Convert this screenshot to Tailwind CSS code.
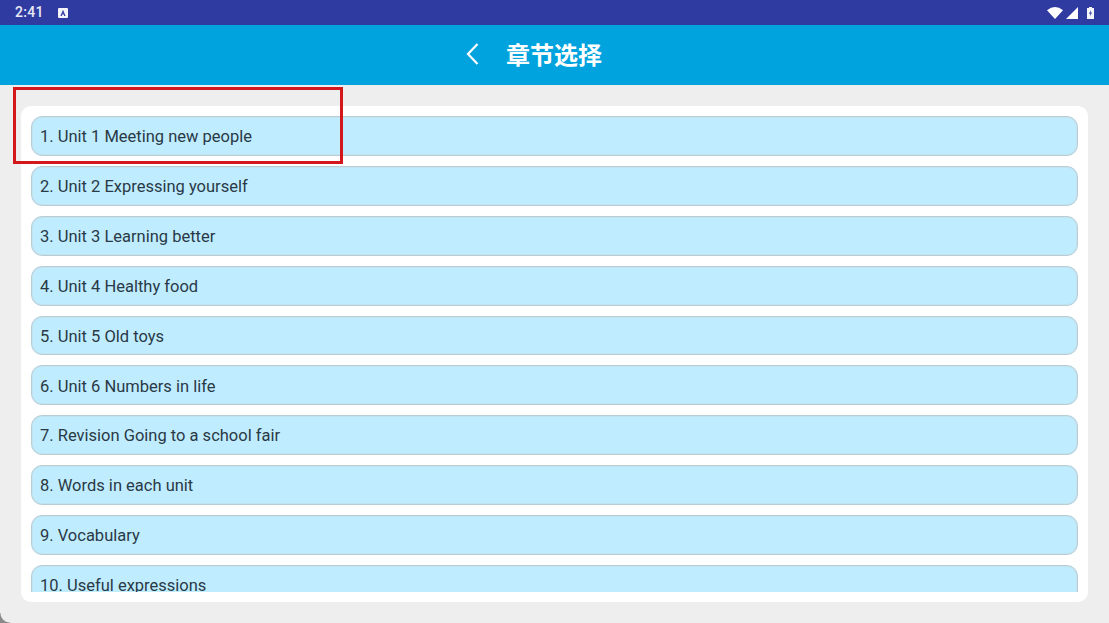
<!DOCTYPE html>
<html lang="zh-CN">
<head>
  <meta charset="UTF-8">
  <meta name="viewport" content="width=device-width, initial-scale=1.0">
  <title>章节选择</title>
  <script src="https://cdn.jsdelivr.net/npm/@tailwindcss/browser@4"></script>
</head>
<body class="bg-[#eeeeee] font-['Roboto','Noto_Sans_CJK_SC',sans-serif]">
  <div class="relative w-[1109px] h-[623px] overflow-hidden bg-[#eeeeee]">
    <!-- Status bar -->
    <div class="h-[25px] bg-[#303ba2] flex items-center justify-between pl-[15px] pr-[15px] text-white">
      <div class="flex items-center">
        <span class="text-[14px] font-medium tracking-[0.3px] text-[#e8eaf6]">2:41</span>
        <svg class="ml-[14px]" width="10" height="10" viewBox="0 0 10 10"><rect width="10" height="10" rx="1" fill="#f4f5fb"/><path d="M5 1.8 L7.6 8 H6.2 L5.7 6.6 H4.3 L3.8 8 H2.4 Z M4.7 5.5 H5.3 L5 4.5 Z" fill="#303ba2" fill-rule="evenodd"/></svg>
      </div>
      <div class="flex items-center">
        <svg width="16" height="12" viewBox="0 0 16 12"><path d="M0 3.2 Q8 -3.2 16 3.2 L8 12 Z" fill="#fff"/></svg>
        <svg class="ml-[3px]" width="12" height="12" viewBox="0 0 12 12"><path d="M12 0 V12 H0 Z" fill="#fff"/></svg>
        <svg class="ml-[9px]" width="7" height="12" viewBox="0 0 7 12"><path d="M2 0 H5 V1 H7 V12 H0 V1 H2 Z" fill="#f4f5fb"/><path d="M4 3 L2 6.8 H3.4 L3 9.5 L5 5.6 H3.6 Z" fill="#303ba2"/></svg>
      </div>
    </div>

    <!-- Header -->
    <div class="h-[60px] bg-[#00a3dd] flex items-center pl-[466px] pb-[2px] text-white">
      <svg width="13" height="22" viewBox="0 0 13 22" fill="none" stroke="#fff" stroke-width="2.2"><path d="M11.5 1 L2 11 L11.5 21"/></svg>
      <h1 class="ml-[27px] text-[24px] leading-[30px] font-bold font-['Noto_Sans_CJK_SC',sans-serif]">章节选择</h1>
    </div>

    <!-- Chapter list -->
    <div class="mx-[21px] mt-[21px] h-[496px] bg-white rounded-[10px] p-[10px]">
      <div class="h-[476px] overflow-hidden">
        <div class="mb-[10px] h-[39.9px] flex items-center pl-[8px] pt-[3px] bg-[#bfedff] border border-[#b9cdd7] shadow-[inset_0_0_0_1px_#c3e3ef] rounded-[11px] text-[16.5px] text-[#2a3946]">1. Unit 1 Meeting new people</div>
        <div class="mb-[10px] h-[39.9px] flex items-center pl-[8px] pt-[3px] bg-[#bfedff] border border-[#b9cdd7] shadow-[inset_0_0_0_1px_#c3e3ef] rounded-[11px] text-[16.5px] text-[#2a3946]">2. Unit 2 Expressing yourself</div>
        <div class="mb-[10px] h-[39.9px] flex items-center pl-[8px] pt-[3px] bg-[#bfedff] border border-[#b9cdd7] shadow-[inset_0_0_0_1px_#c3e3ef] rounded-[11px] text-[16.5px] text-[#2a3946]">3. Unit 3 Learning better</div>
        <div class="mb-[10px] h-[39.9px] flex items-center pl-[8px] pt-[3px] bg-[#bfedff] border border-[#b9cdd7] shadow-[inset_0_0_0_1px_#c3e3ef] rounded-[11px] text-[16.5px] text-[#2a3946]">4. Unit 4 Healthy food</div>
        <div class="mb-[10px] h-[39.9px] flex items-center pl-[8px] pt-[3px] bg-[#bfedff] border border-[#b9cdd7] shadow-[inset_0_0_0_1px_#c3e3ef] rounded-[11px] text-[16.5px] text-[#2a3946]">5. Unit 5 Old toys</div>
        <div class="mb-[10px] h-[39.9px] flex items-center pl-[8px] pt-[3px] bg-[#bfedff] border border-[#b9cdd7] shadow-[inset_0_0_0_1px_#c3e3ef] rounded-[11px] text-[16.5px] text-[#2a3946]">6. Unit 6 Numbers in life</div>
        <div class="mb-[10px] h-[39.9px] flex items-center pl-[8px] pt-[3px] bg-[#bfedff] border border-[#b9cdd7] shadow-[inset_0_0_0_1px_#c3e3ef] rounded-[11px] text-[16.5px] text-[#2a3946]">7. Revision Going to a school fair</div>
        <div class="mb-[10px] h-[39.9px] flex items-center pl-[8px] pt-[3px] bg-[#bfedff] border border-[#b9cdd7] shadow-[inset_0_0_0_1px_#c3e3ef] rounded-[11px] text-[16.5px] text-[#2a3946]">8. Words in each unit</div>
        <div class="mb-[10px] h-[39.9px] flex items-center pl-[8px] pt-[3px] bg-[#bfedff] border border-[#b9cdd7] shadow-[inset_0_0_0_1px_#c3e3ef] rounded-[11px] text-[16.5px] text-[#2a3946]">9. Vocabulary</div>
        <div class="mb-[10px] h-[39.9px] flex items-center pl-[8px] pt-[3px] bg-[#bfedff] border border-[#b9cdd7] shadow-[inset_0_0_0_1px_#c3e3ef] rounded-[11px] text-[16.5px] text-[#2a3946]">10. Useful expressions</div>
      </div>
    </div>

    <!-- Red highlight box over the first row -->
    <div class="absolute left-[13px] top-[87px] w-[330px] h-[77px] border-[3px] border-[#d3181c]"></div>
    <!-- Window corner -->
    <div class="absolute left-0 bottom-0 w-[10px] h-[10px] bg-[radial-gradient(circle_at_100%_0,transparent_9px,#8a8a8a_10px)]"></div>
  </div>
</body>
</html>
